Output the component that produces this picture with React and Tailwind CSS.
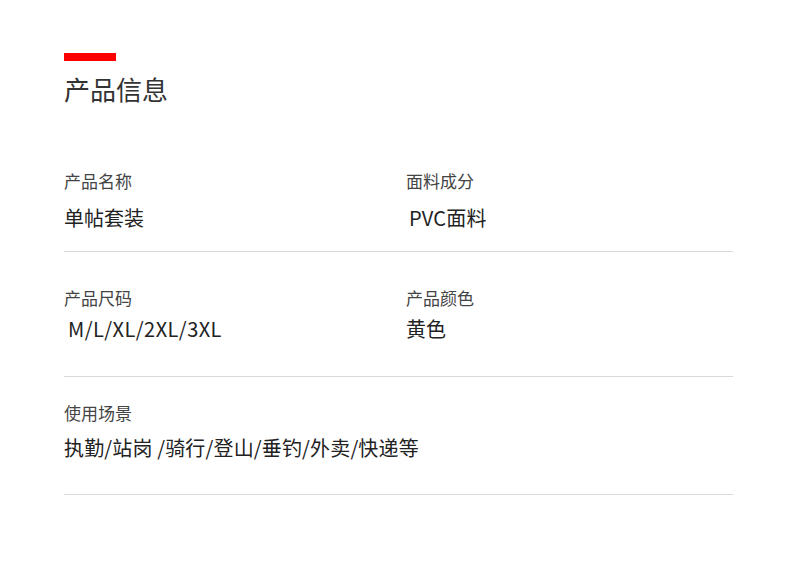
export default function App() {
  const font = { fontFamily: '"Noto Sans CJK SC", "Noto Sans", sans-serif' };
  return (
    <div className="w-[790px] h-[569px] bg-white overflow-hidden" style={font}>
      <div className="pl-[64px] pr-[57px] pt-[53px] flex flex-col">
        <div className="w-[52px] h-[8px] bg-[#ff0000]" />
        <div className="mt-[15px] text-[26px] leading-[26px] text-[#333333]">产品信息</div>

        <div className="mt-[70px] grid grid-cols-[342px_1fr]">
          <div className="flex flex-col">
            <div className="text-[17px] leading-[17px] text-[#444444]">产品名称</div>
            <div className="mt-[19px] text-[20px] leading-[20px] text-[#222222]">单帖套装</div>
          </div>
          <div className="flex flex-col">
            <div className="text-[17px] leading-[17px] text-[#444444]">面料成分</div>
            <div className="mt-[19px] pl-[3px] text-[20px] leading-[20px] text-[#222222] tracking-[0.2px]">PVC面料</div>
          </div>
        </div>
        <div className="mt-[23px] h-px bg-[#d9d9d9]" />

        <div className="mt-[37px] grid grid-cols-[342px_1fr]">
          <div className="flex flex-col">
            <div className="text-[17px] leading-[17px] text-[#444444]">产品尺码</div>
            <div className="mt-[13px] pl-[4px] text-[20px] leading-[20px] text-[#222222] tracking-[0.45px]">M/L/XL/2XL/3XL</div>
          </div>
          <div className="flex flex-col">
            <div className="text-[17px] leading-[17px] text-[#444444]">产品颜色</div>
            <div className="mt-[13px] text-[20px] leading-[20px] text-[#222222]">黄色</div>
          </div>
        </div>
        <div className="mt-[37px] h-px bg-[#d9d9d9]" />

        <div className="mt-[27px] flex flex-col">
          <div className="text-[17px] leading-[17px] text-[#444444]">使用场景</div>
          <div className="mt-[17px] text-[20px] leading-[20px] text-[#222222] tracking-[0.15px]">执勤/站岗 /骑行/登山/垂钓/外卖/快递等</div>
        </div>
        <div className="mt-[36px] h-px bg-[#d9d9d9]" />
      </div>
    </div>
  );
}
